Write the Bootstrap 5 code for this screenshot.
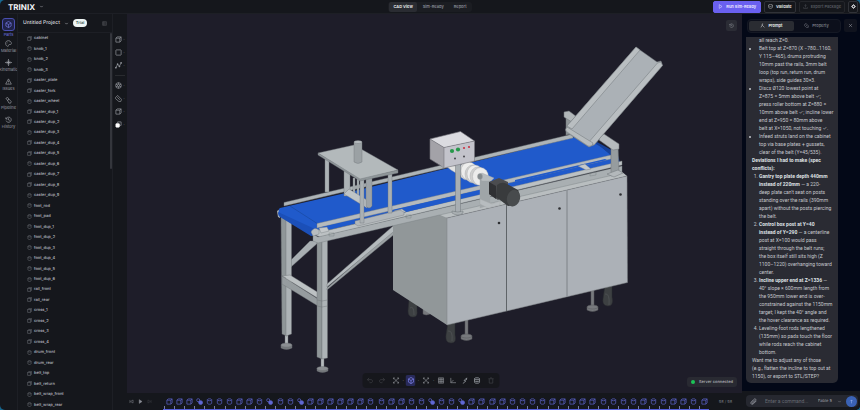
<!DOCTYPE html>
<html lang="en" data-bs-theme="dark">
<head>
<meta charset="utf-8">
<meta name="viewport" content="width=device-width, initial-scale=1">
<title>TRINIX – Untitled Project</title>
<link href="https://cdn.jsdelivr.net/npm/bootstrap@5.3.0/dist/css/bootstrap.min.css" rel="stylesheet">
<style>
:root{--panel:#15171c;--line:#1d1f25}
html,body{height:100%}
body{background:#17678f;font-family:Inter,"Liberation Sans",sans-serif;font-size:5px;line-height:8px;color:#c9cbd1;overflow:hidden;text-rendering:geometricPrecision}
svg{display:block}
.ico{width:7px;height:7px;fill:none;stroke:currentColor;stroke-width:1.5;flex:none}
.ico-sm{width:5px;height:5px}
.solid{fill:currentColor}
.app{height:100vh;background:var(--panel);border-radius:5px;overflow:hidden;display:grid;grid-template-rows:14px minmax(0,1fr)}
.topbar{display:grid;grid-template-columns:1fr auto 1fr;border-bottom:1px solid var(--line)}
.brand{font-size:8px;font-weight:700;color:#f4f5f7}
.app button{background:none;font-size:4px;line-height:7px;padding:0;border-radius:2px;color:inherit;border:1px solid transparent;display:flex;align-items:center;justify-content:center;gap:3px;white-space:nowrap}
.seg{background:#1b1d22;border-radius:3px}
.views{gap:2px;padding:0 1px}
.app .seg button{height:10px;padding:0 3px;color:#989ba3;font-weight:500}
.app .seg button.active{background:#2a2c32;color:#f1f2f4;font-weight:600}
.app .topact button{height:12px;padding:0 3px;font-weight:600;border-color:#303238;color:#eeeff2}
.topact{gap:3px;padding-right:2px}
.app .topact .run{background:#6a60ef;border-color:#6a60ef;color:#efedff;padding:0 4px}
.app .topact .off{color:#565960;border-color:#24262b}
.app .topact .cog{width:10px;padding:0}
.work{display:grid;grid-template-columns:18px 95px 14px minmax(0,1fr) 118px;min-height:0}
.rail{border-right:1px solid var(--line);overflow:hidden}
.app .rail button{flex-direction:column;gap:1px;height:19px;width:100%;font-size:4px;line-height:6px;color:#9a9da4}
.app .rail .active{color:#757ae6}
.tile{padding:2px;border:1px solid transparent;border-radius:3px}
.active .tile{background:#20234a;border-color:#4a4fb0}
.tree{min-height:0;display:grid;grid-template-rows:19px minmax(0,1fr);border-right:1px solid var(--line)}
.treehead{border-bottom:1px solid var(--line);padding:0 5px;color:#d9dade;font-weight:500;white-space:nowrap}
.trial{background:#eef5f4;color:#315a52;border-radius:6px;padding:0 3px;font-size:4px;font-weight:600}
.nodes{position:relative;padding-left:9px;min-height:0}
.node{flex:1 1 0;min-height:0;color:#b9bcc2;font-size:4px;font-weight:500;text-decoration:none;gap:2px}
.node .ico{color:#7d8088}
.thumb{position:absolute;right:0;top:0;width:2px;height:36%;background:#34363c;border-radius:1px}
.tools{padding-top:19px;color:#9a9da4}
.app .tools button{height:13px;gap:1px;width:100%}
.tools hr{margin:3px 2px;color:#666}
.mid{display:grid;grid-template-rows:minmax(0,1fr) 17px;min-width:0;min-height:0}
.stage{position:relative;background:#1e1d29;min-height:0}
.stage>svg{width:100%;height:100%}
.reset,.status,.dock{position:absolute}
.app .reset{right:5px;top:6px;width:11px;height:11px;background:#2b2c35;color:#90939b}
.status{right:5px;bottom:6px;background:#292a32;border-radius:3px;padding:1px 4px;color:#b3b5bc;line-height:8px;white-space:nowrap;font-size:4px;font-weight:500}
.live{width:4px;height:4px;border-radius:50%;background:#1cc458}
.dock{left:50%;bottom:5px;transform:translateX(-50%);margin-left:-4px;background:#16171c;border-radius:4px;width:137px;height:15px;padding:0 3px;color:#8f9299}
.app .dock button{width:10px;height:11px}
.app .dock .active{background:#282a59;color:#858af7}
.dim{opacity:.35}
.time{padding:0;color:#8b8e96;min-width:0}
.app .time>button{width:9px}
.track{border-bottom:1px solid #5660dc;color:#6068d4;margin-left:9px;padding-left:1px;height:17px;min-width:0}
.step{flex:1 1 0;display:flex;justify-content:center;align-items:center;position:relative;min-width:0}
.step::before{content:"";position:absolute;left:0;bottom:0;height:3px;width:1px;background:#7479a8}
.count{width:33px;text-align:center;color:#70737b;font-size:4px}
.side{background:#030817;min-height:0;display:grid;grid-template-rows:23px minmax(0,1fr) 19px}
.sidehead{padding:1px 3px 1px 5px;gap:3px}
.duo{background:#0c0f1b;border:1px solid #141824;border-radius:4px;padding:1px}
.app .duo button{flex:1;color:#858891}
.app .duo .active{background:#292a37;color:#e3e4e9}
.app .shut{width:13px;height:13px;background:#10131e;color:#a0a3ab}
.chat{display:flex;flex-direction:column;justify-content:flex-end;overflow:hidden;padding:0 22px 8px 4px}
.bubble{background:#2a2b33;border-radius:0 0 5px 5px;padding:0 5px 3px 6px;color:#c6c8ce;white-space:nowrap;font-family:Roboto,Inter,sans-serif;text-rendering:auto}
.bubble b{color:#dfe0e4;font-weight:700}
.bubble ul,.bubble ol{padding-left:7px;margin:0}
.bubble p{margin:0}
.compose{background:var(--panel);padding:4px 2px 3px 4px}
.field{background:#262830;border-radius:4px;padding:0 1px 0 4px;color:#8c8f97}
.field input{background:none;border:0;outline:0;padding:0;min-width:0;width:10px;font-family:Roboto,sans-serif;font-size:5px;line-height:8px;color:#bbb}
.field input::placeholder{color:#666a73;opacity:1}
.field select{appearance:none;background:none;border:0;padding:0;font-size:4px;line-height:8px;color:#a0a3aa;width:15px;text-rendering:geometricPrecision}
.app .send{width:11px;height:11px;border-radius:50%;background:#3a62b5;color:#a9c2ff}
</style>
<script src="https://cdn.jsdelivr.net/npm/bootstrap@5.3.0/dist/js/bootstrap.bundle.min.js" defer></script>
</head>
<body>
<svg width="0" height="0" class="position-absolute" aria-hidden="true">
<symbol id="box" viewBox="0 0 16 16"><path d="M2 5h9v9H2zM2 5l3-3h9v9l-3 3M11 5l3-3"/></symbol>
<symbol id="cyl" viewBox="0 0 16 16"><path d="M3 4c0-3 10-3 10 0v8c0 3-10 3-10 0zM3 4c0 3 10 3 10 0"/></symbol>
<symbol id="join" viewBox="0 0 16 16"><circle cx="5" cy="5" r="3.5"/><circle cx="10.500" cy="10.500" r="4.500" fill="currentColor"/></symbol>
<symbol id="union" viewBox="0 0 16 16"><path d="M6 6V2h8v8h-4"/><rect x="2" y="6" width="8" height="8" rx="1" fill="#fff" stroke="#fff"/></symbol>
<symbol id="cube" viewBox="0 0 16 16"><path d="M8 1l6 3.500v7L8 15l-6-3.500v-7zM2 4.500L8 8l6-3.500M8 8v7"/></symbol>
<symbol id="palette" viewBox="0 0 16 16"><path d="M8 1.500C-1 1.500 0 13 6 14.500c3 .5 1-3 3-4s5 1 5.500-2c.5-4-3-7-6.500-7z"/><path d="M5 5h1M9 4h1M4 8h1"/></symbol>
<symbol id="kin" viewBox="0 0 16 16"><circle cx="8" cy="8" r="2.500" fill="currentColor"/><path d="M8 1v14M1 8h14M6 3l2-2 2 2M6 13l2 2 2-2M3 6L1 8l2 2M13 6l2 2-2 2"/></symbol>
<symbol id="warn" viewBox="0 0 16 16"><path d="M8 2l6.500 12h-13zM8 6v4M8 11.500v1"/></symbol>
<symbol id="pipe" viewBox="0 0 16 16"><path d="M2 3l4-2 3 4-3 3zM6 8l3-3 5 5-1 4H9z"/></symbol>
<symbol id="hist" viewBox="0 0 16 16"><path d="M2 3v4h4M2.500 6.500a6 6 0 1 1 0 4M8 5v4l3 1"/></symbol>
<symbol id="down" viewBox="0 0 16 16"><path d="M4 6l4 4 4-4"/></symbol>
<symbol id="menu" viewBox="0 0 16 16"><path d="M2 2h12v12H2zM2 6h12M2 10h12M6 2v12"/></symbol>
<symbol id="square" viewBox="0 0 16 16"><rect x="2" y="2" width="12" height="12" rx="1"/></symbol>
<symbol id="poly" viewBox="0 0 16 16"><path d="M2 13l4-8 4 5 4-8"/><path d="M1 12h2v2H1zM5 4h2v2H5zM9 9h2v2H9zM13 1h2v2h-2z" fill="currentColor"/></symbol>
<symbol id="globe" viewBox="0 0 16 16"><circle cx="8" cy="8" r="6.500"/><circle cx="8" cy="8" r="2.500"/><path d="M8 1.500v4M8 10.500v4M2 5l4 2M14 5l-4 2M2 11l4-2M14 11l-4-2"/></symbol>
<symbol id="tag" viewBox="0 0 16 16"><path d="M1 6l5-5 9 9-2 5H9L1 8zM5 5l6 6"/></symbol>
<symbol id="play" viewBox="0 0 16 16"><path d="M4 2l9 6-9 6z"/></symbol>
<symbol id="check" viewBox="0 0 16 16"><path d="M8 1l6 2v6c0 3-4 6-6 6s-6-3-6-6V3zM5 8l2 2 4-4"/></symbol>
<symbol id="upload" viewBox="0 0 16 16"><path d="M2 10v4h12v-4M8 11V2M5 5l3-3 3 3"/></symbol>
<symbol id="cog" viewBox="0 0 16 16"><circle cx="8" cy="8" r="4" stroke-width="3"/><path d="M8 1v3M8 12v3M1 8h3M12 8h3M3 3l2 2M11 11l2 2M13 3l-2 2M5 11l-2 2" stroke-width="2.500"/></symbol>
<symbol id="x" viewBox="0 0 16 16"><path d="M3 3l10 10M13 3L3 13"/></symbol>
<symbol id="undo" viewBox="0 0 16 16"><path d="M6 2L2 6l4 4M2 6h8c5 0 5 7 0 7H7"/></symbol>
<symbol id="redo" viewBox="0 0 16 16"><path d="M10 2l4 4-4 4M14 6H6c-5 0-5 7 0 7h3"/></symbol>
<symbol id="cross" viewBox="0 0 16 16"><path d="M2 2l12 12M14 2L2 14M2 5V2h3M11 2h3v3M2 11v3h3M14 11v3h-3"/></symbol>
<symbol id="grid" viewBox="0 0 16 16"><path d="M2 2h12v12H2zM2 6h12M2 10h12M6 2v12M10 2v12"/></symbol>
<symbol id="axis" viewBox="0 0 16 16"><path d="M3 2v11h12M3 13l6-6"/></symbol>
<symbol id="bolt" viewBox="0 0 16 16"><path d="M12 2L6 8l4 1-7 6M12 2l-1 5" stroke-width="2"/></symbol>
<symbol id="stack" viewBox="0 0 16 16"><path d="M2 4c0-3 12-3 12 0v8c0 3-12 3-12 0zM2 4c0 3 12 3 12 0M2 8c0 3 12 3 12 0" stroke-width="2"/></symbol>
<symbol id="trash" viewBox="0 0 16 16"><path d="M2 4h12M4 4v10h8V4M6 2h4"/></symbol>
<symbol id="prev" viewBox="0 0 16 16"><path d="M3 3v10M13 3v10L5 8z"/></symbol>
<symbol id="next" viewBox="0 0 16 16"><path d="M13 3v10M3 3v10l8-5z"/></symbol>
<symbol id="clip" viewBox="0 0 16 16"><path d="M14 7l-6 6c-4 4-8-1-5-4l6-6c3-3 6 1 4 3l-6 6c-2 2-3-1-2-2l5-5" stroke-width="2"/></symbol>
<symbol id="up" viewBox="0 0 16 16"><path d="M8 14V3M4 7l4-4 4 4"/></symbol>
<symbol id="person" viewBox="0 0 16 16"><path d="M3 14l4-7 3 3 4 4M7 7V3h3"/></symbol>
</svg>

<div class="app">
<header class="topbar align-items-center">
  <div class="d-flex align-items-center gap-1 ps-1"><span class="brand ms-1">TRINIX</span><svg class="ico ico-sm"><use href="#down"/></svg></div>
  <nav class="seg views d-flex" aria-label="Views"><button class="active">CAD View</button><button>Sim-Ready</button><button>Report</button></nav>
  <div class="topact d-flex justify-content-end">
    <button class="run"><svg class="ico ico-sm"><use href="#play"/></svg>Run Sim-Ready</button>
    <button><svg class="ico ico-sm"><use href="#check"/></svg>Validate</button>
    <button class="off" disabled><svg class="ico ico-sm"><use href="#upload"/></svg>Export Package</button>
    <button class="cog" aria-label="Settings"><svg class="ico ico-sm"><use href="#cog"/></svg></button>
  </div>
</header>
<main class="work">
  <nav class="rail pt-1" aria-label="Sections">
    <button class="active"><span class="tile"><svg class="ico"><use href="#cube"/></svg></span>Parts</button>
    <button><svg class="ico"><use href="#palette"/></svg>Material</button>
    <button><svg class="ico"><use href="#kin"/></svg>Kinematic</button>
    <button><svg class="ico"><use href="#warn"/></svg>Issues</button>
    <button><svg class="ico"><use href="#pipe"/></svg>Pipeline</button>
    <button><svg class="ico"><use href="#hist"/></svg>History</button>
  </nav>
  <section class="tree">
    <div class="treehead d-flex align-items-center gap-1"><span>Untitled Project</span><svg class="ico ico-sm"><use href="#down"/></svg><span class="trial">Trial</span><svg class="ico ico-sm ms-auto dim"><use href="#menu"/></svg></div>
    <div class="nodes d-flex flex-column" id="nodes"><div class="thumb"></div></div>
  </section>
  <div class="tools" role="toolbar" aria-label="Modeling">
    <button aria-label="Box"><svg class="ico"><use href="#box"/></svg>·</button>
    <button aria-label="Sketch"><svg class="ico"><use href="#square"/></svg>·</button>
    <button aria-label="Polyline"><svg class="ico"><use href="#poly"/></svg>·</button>
    <hr>
    <button aria-label="Revolve"><svg class="ico"><use href="#globe"/></svg>·</button>
    <button aria-label="Fillet"><svg class="ico"><use href="#tag"/></svg>·</button>
    <button aria-label="Shell"><svg class="ico"><use href="#box"/></svg>·</button>
    <button aria-label="Boolean"><svg class="ico"><use href="#union"/></svg>·</button>
  </div>
  <section class="mid">
    <div class="stage">
      <svg viewBox="127 14 615 379" role="img" aria-label="Conveyor model" stroke-linejoin="round">
        <!-- casters and levelling feet -->
        <g fill="#3d4042" stroke="#2b2d30" stroke-width=".5">
          <path d="M409 300h8v11q1 6-4 6t-5-6zM448 322h7v13q2 8-4 8t-5-8zM605 285h7v12q2 9-4 9t-5-7z"/>
          <path d="M410 308q4-3 4 7M448 331q5-1 4 10M605 294q5-1 4 11" fill="none" stroke="#5b5e60"/>
        </g>
        <g fill="#77797d" stroke="#55575b" stroke-width=".5">
          <path d="M465 319h3v17h-3zM591 290h3v17h-3z"/>
          <path d="M461 336v3q5.500 3 11 0v-3zM587 307v3q5.500 3 11 0v-3zM423 309h7v5q-4 2-7 0z"/>
          <ellipse cx="466.500" cy="336" rx="5.500" ry="2"/><ellipse cx="592.500" cy="307" rx="5.500" ry="2"/>
        </g>
        <!-- stand -->
        <g stroke="#6c7174" stroke-width=".4">
          <path fill="#b5babd" d="M285 334h3v11h-3zM321 358h3v11h-3z"/>
          <path fill="#74777b" d="M281 345v3q5.500 3 11 0v-3zM317 368v3q5.500 3 11 0v-3z"/>
          <ellipse fill="#8b8e92" cx="286.500" cy="345" rx="5.500" ry="2"/><ellipse fill="#8b8e92" cx="322.500" cy="368.500" rx="5.500" ry="2"/>
          <path fill="#a8aeb2" d="M291 260l19-19h10l-29 26z"/>
          <path fill="#8f9698" d="M281 215h6v121l-5-2z"/><path fill="#adb3b6" d="M286 217h5.500v117l-5.500 2z"/>
          <path fill="#969c9f" d="M282 276l36 23v7l-36-22z"/><path fill="#bcc1c3" d="M282 276l8-1 29 18v6z"/>
          <path fill="#8f9698" d="M317 238h5v121l-5-2z"/><path fill="#adb3b6" d="M322 238h5.500v120l-5.500 1z"/>
          <path fill="none" d="M317 300l5 1 5.500-1M317 306l5 1 5.500-1M282 276l4 2"/>
          <path fill="#9ca2a5" d="M327 288l72-63 9-2-81 67z"/><path fill="#b4babd" d="M327 284l66-58 11-3-77 64z"/>
        </g>
        <!-- cabinet -->
        <path fill="#919799" d="M393 225l24-10 24-2 6 5v107l-54-35z"/>
        <path fill="#b9bec0" d="M438 214l9 4 180-42-6-5z"/>
        <path fill="#acb1b7" stroke="#7c8185" stroke-width=".5" d="M447 218l180-42 .5 106.500L447 325z"/>
        <path fill="none" stroke="#5f6468" stroke-width="1" d="M506.500 204v107"/><path fill="none" stroke="#858a8f" stroke-width="1.200" d="M567 190v106.500"/>
        <g fill="#2d2f32"><circle cx="499" cy="223" r="1.300"/><circle cx="559.500" cy="208.500" r="1.300"/><circle cx="620.500" cy="194.500" r="1.300"/></g>
        <!-- belt -->
        <path fill="#abb1b4" d="M277 211l3-2v9l-2-1z"/>
        <path fill="#205acb" d="M280 208l70-16 225-55 23 7 22 18-12 4-292 67-4 3-33-22q-1-5 1-6z"/>
        <path fill="#1b4fb8" d="M278 212q0 4 2 5l31 19 3-2 1-5z"/>
        <path fill="none" stroke="#174393" stroke-width=".5" d="M290 206l28 18"/>
        <path fill="#16419a" d="M594 143q10 5 18 14l8 5-3-9-20-11z"/>
        <g stroke="#777d81" stroke-width=".4">
          <path fill="#aeb4b7" d="M284 202.500L573 134v4L284 206z"/>
          <path fill="#b5babd" d="M317 223.500L611 155v4L317 228z"/>
          <path fill="#bcc1c3" d="M313 234l6-4 10 0 293-69v4L320 237z"/>
          <path fill="#205acb" stroke="none" d="M329 229l31-7-2-3-36 8zM398 214l82-20v-4l-88 20zM515 182l92-22-2-1-90 21z"/>
          <path fill="#a9afb2" d="M313 234l5 3 304-71v7l-304 70-5-2z"/>
          <path fill="none" d="M329 233h5v3h-5zM406 215h5v3h-5zM590 173l6-1v3l-6 1z"/>
          <path fill="#c4c8ca" d="M319 228l8-1 2 4-8 2zM394 211l8-2 4 3-8 2zM578 166l7-2 6 5-5 1z"/>
          <path fill="#b8bdc0" d="M311 232q3-6 8-2v4l-6 2z"/>
        </g>
        <!-- gantry -->
        <g stroke="#71777b" stroke-width=".4">
          <path fill="#adb3b6" d="M325 158h4v34h-4zM344 170h6v26h-6zM353 178h2v16h-2zM357 178h2v18h-2z"/>
          <path fill="#bfc4c6" d="M344 194l5-5 18 11v8z"/>
          <path fill="#9da3a7" d="M366 177h6v29q-3 4-6 0z"/>
          <path fill="#b2b7ba" d="M355 221l45-11 4 2v3l-46 11-3-2z"/>
          <path fill="#aab0b3" d="M360 177h4v46h-4zM388 173h4v40h-4z"/>
          <path fill="#8f9699" d="M318 153l42 25 38-8v3l-38 8-42-26z"/>
          <path fill="#b3b9bb" d="M318 153l36-8 44 25-38 9z"/>
          <path fill="#9ba1a4" d="M354 142v20q4 3 8 0v-20z"/><ellipse fill="#b6bbbe" cx="358" cy="142" rx="4" ry="1.500"/>
        </g>
        <!-- press discs and motor -->
        <g stroke="#a5a6a8" stroke-width=".4">
          <path fill="#e2e2e1" d="M446 166h20v10q-10-1-20-10z"/>
          <ellipse fill="#d6d6d5" cx="467" cy="171" rx="8" ry="9"/><ellipse fill="#ededec" cx="469" cy="171" rx="8" ry="9"/>
          <ellipse fill="#cfcfce" cx="473" cy="174" rx="8" ry="9"/><ellipse fill="#eeeeed" cx="475" cy="174" rx="8" ry="9"/>
          <ellipse fill="#cfcfce" cx="478" cy="176" rx="8" ry="9"/><ellipse fill="#ececeb" cx="480.500" cy="176.500" rx="8" ry="9"/>
          <path fill="#9fa5a8" d="M480 174l10 3v28l-10 3z"/>
          <path fill="#b7bcbf" d="M480 199l12 5 8-3v4l-12 3-8-4zM478 175l4-2 12 5-3 3h-9z"/>
          <ellipse fill="#83898c" cx="480" cy="176.500" rx="2.500" ry="3"/>
        </g>
        <path fill="#4b4c4f" d="M489 182l10-4 9 4v12l-10 6-9-6z"/><path fill="#2f3033" d="M489 182l7 4v13l-7-5z"/>
        <path fill="#393b3d" d="M497 185q5-4 10-1l11 6q4 8-3 15l-7 1-12-9z"/><ellipse fill="#484b4d" cx="513.500" cy="198" rx="6.500" ry="8.500" transform="rotate(15 513 198)"/>
        <!-- control box -->
        <path fill="#a8aeb2" stroke="#73797c" stroke-width=".5" d="M455.500 163h5v49q-2.500 2-5 0z"/>
        <path fill="#a9afb2" stroke="#73797c" stroke-width=".5" d="M452 211v2q6 4 11 0v-2q-5 2-11 0z"/>
        <path fill="#a3a2a8" d="M430 139l14 8.500v20L430 159z"/><path fill="#c3c3cb" d="M444 147.500l30.500-6.500v20l-30.500 7z"/><path fill="#dbdbe0" d="M430 139l30.500-7.500 14 9.500-30.500 6.500z"/>
        <path fill="none" stroke="#77777d" stroke-width=".6" d="M430 139l30.500-7.500 14 9.500v20l-30.500 7-14-9zM430 139l14 8.500v20M444 147.500l30.500-6.500"/>
        <g fill="#26984a"><circle cx="452" cy="151" r="2.100"/><circle cx="458" cy="149.500" r="2.100"/></g>
        <g fill="#c93545"><circle cx="464" cy="148" r="1.100"/><circle cx="469" cy="147" r="1.100"/></g>
        <g fill="#45454b"><circle cx="455" cy="158.500" r="1"/><circle cx="464" cy="156.500" r="1"/></g>
        <!-- incline chute -->
        <g stroke="#70767a" stroke-width=".5">
          <path fill="#8f9598" d="M566 116h6v18l-6 1z"/><path fill="#b1b6b9" d="M564 112l5-1 8 6-2 7-11-7z"/>
          <path fill="#969c9f" d="M611 148l7-2 1 27-8 3z"/><path fill="#b6bbbe" d="M600 136l4-2 15 10v5l-6 1-14-10z"/>
          <path fill="#b3b8bb" d="M607 174l11-4 5 3-9 4z"/>
          <path fill="#abb1b6" d="M636 47l4 3 17 12 4-1 1.500 4.500L594 145l-5 2-23-15 1-6z"/>
          <path fill="#b9bec1" d="M636 47l4 3-68 79-5-3zM657.500 63l3.500-1 1.500 3.500L594 145l-6-2z"/>
          <path fill="#b7bcbe" d="M567 127q-3 3 0 5l21 14q4 1 5-3z"/>
        </g>
      </svg>
      <button class="reset" aria-label="Reset view"><svg class="ico ico-sm"><use href="#hist"/></svg></button>
      <div class="dock d-flex align-items-center justify-content-between" role="toolbar" aria-label="View">
        <button class="dim" aria-label="Undo"><svg class="ico"><use href="#undo"/></svg></button><button class="dim" aria-label="Redo"><svg class="ico"><use href="#redo"/></svg></button><span></span>
        <button aria-label="Fit"><svg class="ico"><use href="#cross"/></svg></button><span>·</span>
        <button class="active" aria-label="Shading"><svg class="ico"><use href="#cube"/></svg></button><span>·</span>
        <button aria-label="Explode"><svg class="ico"><use href="#cross"/></svg></button><span>·</span>
        <button aria-label="Grid"><svg class="ico"><use href="#grid"/></svg></button><button aria-label="Axes"><svg class="ico"><use href="#axis"/></svg></button><button aria-label="Measure"><svg class="ico"><use href="#bolt"/></svg></button><button aria-label="Section"><svg class="ico"><use href="#stack"/></svg></button><span></span>
        <button class="dim" aria-label="Delete"><svg class="ico"><use href="#trash"/></svg></button>
      </div>
      <div class="status d-flex align-items-center gap-1"><span class="live"></span>Server connected</div>
    </div>
    <div class="time d-flex align-items-center">
      <button aria-label="Previous"><svg class="ico ico-sm"><use href="#prev"/></svg></button><button aria-label="Play"><svg class="ico ico-sm solid"><use href="#play"/></svg></button><button class="dim" aria-label="Next"><svg class="ico ico-sm"><use href="#next"/></svg></button>
      <div class="track d-flex flex-grow-1" id="track"></div><span class="count">98 / 98</span>
    </div>
  </section>
  <aside class="side">
    <div class="sidehead d-flex align-items-center">
      <div class="duo seg d-flex flex-grow-1"><button class="active"><svg class="ico ico-sm"><use href="#person"/></svg>Prompt</button><button><svg class="ico ico-sm"><use href="#tag"/></svg>Property</button></div>
      <button class="shut" aria-label="Close"><svg class="ico ico-sm"><use href="#x"/></svg></button>
    </div>
    <div class="chat"><div class="bubble">
      <ul><li class="d-block">all reach Z=0.</li><li>Belt top at Z=870 (X −780…1160,<br>Y 115–465), drums protruding<br>10mm past the rails, 3mm belt<br>loop (top run, return run, drum<br>wraps), side guides 30×3.</li><li>Discs Ø120 lowest point at<br>Z=875 = 5mm above belt ✓;<br>press roller bottom at Z=880 =<br>10mm above belt ✓; incline lower<br>end at Z=950 = 80mm above<br>belt at X=1050, not touching ✓.</li><li>Infeed struts land on the cabinet<br>top via base plates + gussets,<br>clear of the belt (Y=45/535).</li></ul>
      <p><b>Deviations I had to make (spec<br>conflicts):</b></p>
      <ol><li><b>Gantry top plate depth 440mm<br>instead of 220mm</b> — a 220-<br>deep plate can't seat on posts<br>standing over the rails (390mm<br>apart) without the posts piercing<br>the belt.</li><li><b>Control box post at Y=40<br>instead of Y=290</b> — a centerline<br>post at X=100 would pass<br>straight through the belt runs;<br>the box itself still sits high (Z<br>1100–1220) overhanging toward<br>center.</li><li><b>Incline upper end at Z=1336</b> —<br>40° slope × 600mm length from<br>the 950mm lower end is over-<br>constrained against the 1150mm<br>target; I kept the 40° angle and<br>the hover clearance as required.</li><li>Leveling-foot rods lengthened<br>(135mm) so pads touch the floor<br>while rods reach the cabinet<br>bottom.</li></ol>
      <p>Want me to adjust any of those<br>(e.g., flatten the incline to top out at<br>1150), or export to STL/STEP?</p>
    </div></div>
    <div class="compose d-flex"><div class="field d-flex align-items-center gap-1 flex-grow-1">
      <svg class="ico"><use href="#clip"/></svg><input class="flex-grow-1 ms-1" type="text" placeholder="Enter a command..." aria-label="Command"><select aria-label="Model"><option>Fable 5</option></select><svg class="ico ico-sm"><use href="#down"/></svg><button class="send" aria-label="Send"><svg class="ico ico-sm"><use href="#up"/></svg></button>
    </div></div>
  </aside>
</main>
</div>
<script>
// Names starting with "*" are cylinders, the others are boxes.
const parts = "cabinet *knob_1 *knob_2 *knob_3 caster_plate caster_fork *caster_wheel caster_dup_1 caster_dup_2 *caster_dup_3 caster_dup_4 caster_dup_5 *caster_dup_6 caster_dup_7 caster_dup_8 *caster_dup_9 *foot_rod *foot_pad *foot_dup_1 *foot_dup_2 *foot_dup_3 *foot_dup_4 *foot_dup_5 *foot_dup_6 rail_front rail_rear cross_1 cross_2 cross_3 cross_4 *drum_front *drum_rear belt_top belt_return *belt_wrap_front *belt_wrap_rear".split(" ");
const icon = (id, size) => `<svg class="ico ${size}"><use href="#${id}"/></svg>`;
document.getElementById("nodes").insertAdjacentHTML("beforeend", parts.map(p =>
  `<a href="#" class="node d-flex align-items-center">${icon(p[0] === "*" ? "cyl" : "box", "ico-sm")}<span>${p.replace("*", "")}</span></a>`).join(""));
// b = box, c = cylinder, j = boolean join
const steps = "bbbjcccbbcjccjbbbbbbccbbccjccjbbbbccccbbbbbccccbccbbcb";
const kinds = {b: "box", c: "cyl", j: "join"};
document.getElementById("track").innerHTML = [...steps].map(s => `<span class="step">${icon(kinds[s], "")}</span>`).join("");
</script>
</body>
</html>
